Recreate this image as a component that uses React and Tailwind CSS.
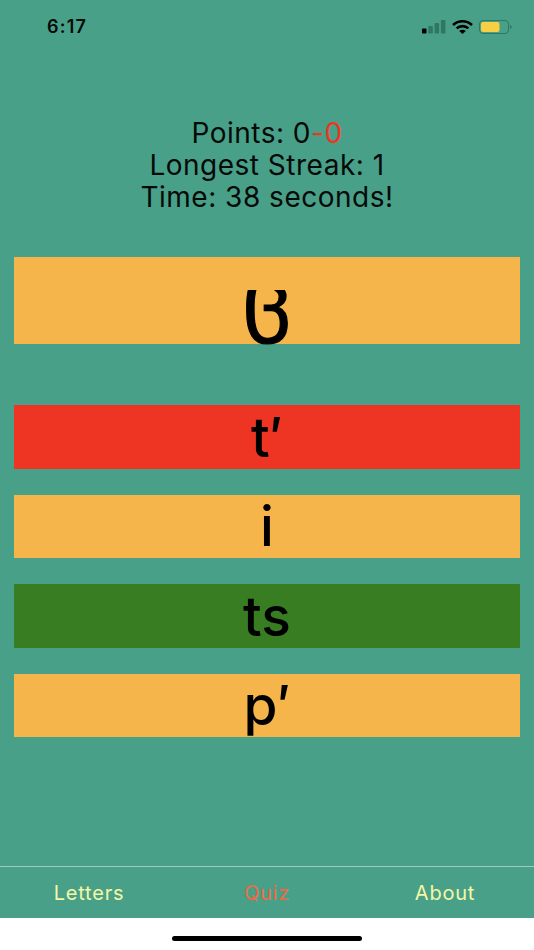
function Answer({ children, color }) {
  return (
    <div className={`h-[63.5px] ${color} flex items-center justify-center text-[55px] font-medium leading-[60px] text-black`}>
      <span>{children}</span>
    </div>
  );
}

export default function App() {
  return (
    <div className="w-[534px] h-[950px] flex flex-col bg-white font-['Inter','Liberation_Sans',Arial,sans-serif]">
      <div className="h-[918px] bg-[#49a088] flex flex-col">
        <div className="h-[52px] flex items-start justify-between pl-[47px] pr-[22px] pt-[16px]">
          <span className="text-[18px] leading-[22px] font-semibold tracking-[1.2px] text-[#050a08]">6:17</span>
          <div className="flex items-center gap-[6px] mt-[4px]">
            <svg width="24" height="14" viewBox="0 0 24 14">
              <rect x="0" y="8.5" width="4.5" height="5" rx="0.8" fill="#000" />
              <rect x="6.3" y="6" width="4.5" height="7.5" rx="0.8" fill="#2f7663" />
              <rect x="12.6" y="3" width="4.5" height="10.5" rx="0.8" fill="#2f7663" />
              <rect x="18.9" y="0" width="4.5" height="13.5" rx="0.8" fill="#2f7663" />
            </svg>
            <svg width="21" height="14" viewBox="0 0 21 14" fill="none" stroke="#000" strokeWidth="2.6">
              <path d="M1 5 C6.5 0 14.5 0 20 5" />
              <path d="M4.6 8.4 C8 5.4 13 5.4 16.4 8.4" />
              <path d="M10.5 14 L7.2 10.9 C9.2 9.4 11.8 9.4 13.8 10.9 Z" fill="#000" stroke="none" />
            </svg>
            <svg width="33" height="14" viewBox="0 0 33 14" fill="none">
              <rect x="0.5" y="0.5" width="29" height="13" rx="3.5" stroke="#2f7663" />
              <rect x="2" y="2" width="18.5" height="10" rx="2" fill="#f7cf45" />
              <path d="M31 5 C32.2 5.4 32.6 6 32.6 7 C32.6 8 32.2 8.6 31 9 Z" fill="#2f7663" />
            </svg>
          </div>
        </div>

        <div className="mt-[65px] text-center text-[28px] leading-[32px] tracking-[0.5px] text-[#050a08]">
          <div>Points: 0<span className="text-[#ee3524]">-0</span></div>
          <div>Longest Streak: 1</div>
          <div>Time: 38 seconds!</div>
        </div>

        <div className="mt-[44px] mx-[14px] h-[87px] bg-[#f5b54b] flex justify-center items-start">
          <div className="mt-[33px] h-[56px] overflow-hidden flex items-end">
            <span className="block text-[84px] leading-[102px] text-black [-webkit-text-stroke:1.2px_black] font-['DejaVu_Sans',sans-serif]">ც</span>
          </div>
        </div>

        <div className="mt-[61px] mx-[14px] flex flex-col gap-[26px]">
          <Answer color="bg-[#ee3524]">t′</Answer>
          <Answer color="bg-[#f5b54b]">i</Answer>
          <Answer color="bg-[#387d21]">ts</Answer>
          <Answer color="bg-[#f5b54b]">p′</Answer>
        </div>

        <div className="mt-auto h-[52px] border-t border-[#a3c8bc] grid grid-cols-3 items-center text-center text-[20px] tracking-[0.8px]">
          <span className="text-[#f4f7a6]">Letters</span>
          <span className="text-[#ee6a44]">Quiz</span>
          <span className="text-[#f4f7a6]">About</span>
        </div>
      </div>
      <div className="flex-1 flex items-start justify-center pt-[18px]">
        <div className="w-[190px] h-[5px] rounded-full bg-black" />
      </div>
    </div>
  );
}
